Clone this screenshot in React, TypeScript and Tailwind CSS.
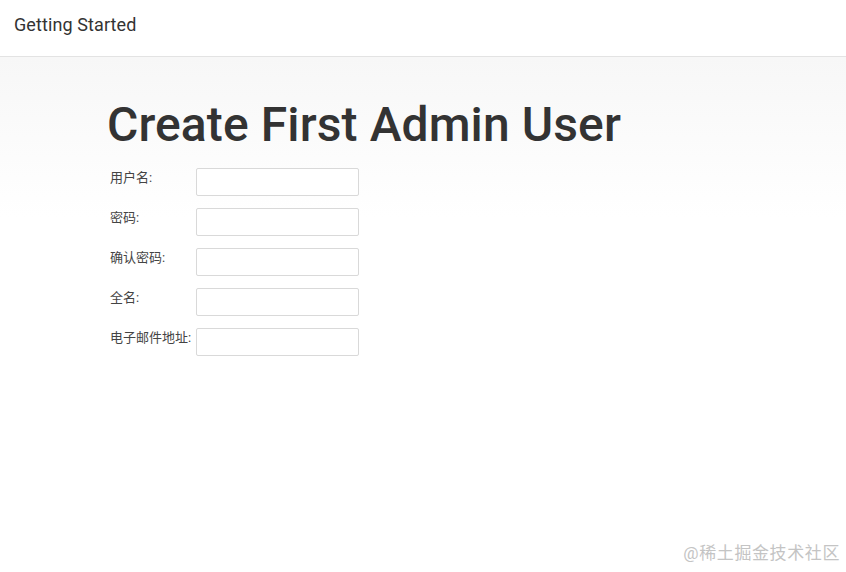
export default function App() {
  const fields = ["用户名:", "密码:", "确认密码:", "全名:", "电子邮件地址:"];

  return (
    <div
      className="relative w-[846px] h-[572px] bg-white text-[#333] overflow-hidden"
      style={{ fontFamily: 'Roboto, "Noto Sans CJK SC", sans-serif' }}
    >
      {/* Header */}
      <div className="h-[57px] border-b border-[#e3e3e3] bg-white flex items-center pl-[14px]">
        <span className="text-[18px] text-[#333] tracking-[0.1px] -mt-[8px]">Getting Started</span>
      </div>

      {/* Body */}
      <div className="bg-gradient-to-b from-[#f7f7f7] to-white to-[160px] pl-[107px] pt-[40px] h-[515px]">
        <h1 className="text-[48px] leading-[56px] text-[#333] font-medium tracking-[0.1px]">
          Create First Admin User
        </h1>
        <div className="mt-[15px] flex flex-col gap-[12px]">
          {fields.map((label) => (
            <div key={label} className="flex items-center">
              <label className="w-[89px] pl-[3px] text-[13px] text-[#444] -mt-[8px] whitespace-nowrap">
                {label}
              </label>
              <input
                type="text"
                className="w-[163px] h-[28px] bg-white border border-[#d9d9d9] rounded-[2px] outline-none"
              />
            </div>
          ))}
        </div>
      </div>

      {/* Watermark */}
      <div className="absolute right-[6px] bottom-[6px] text-[17px] text-[#c4c4c4] tracking-[0.6px]">
        @稀土掘金技术社区
      </div>
    </div>
  );
}
